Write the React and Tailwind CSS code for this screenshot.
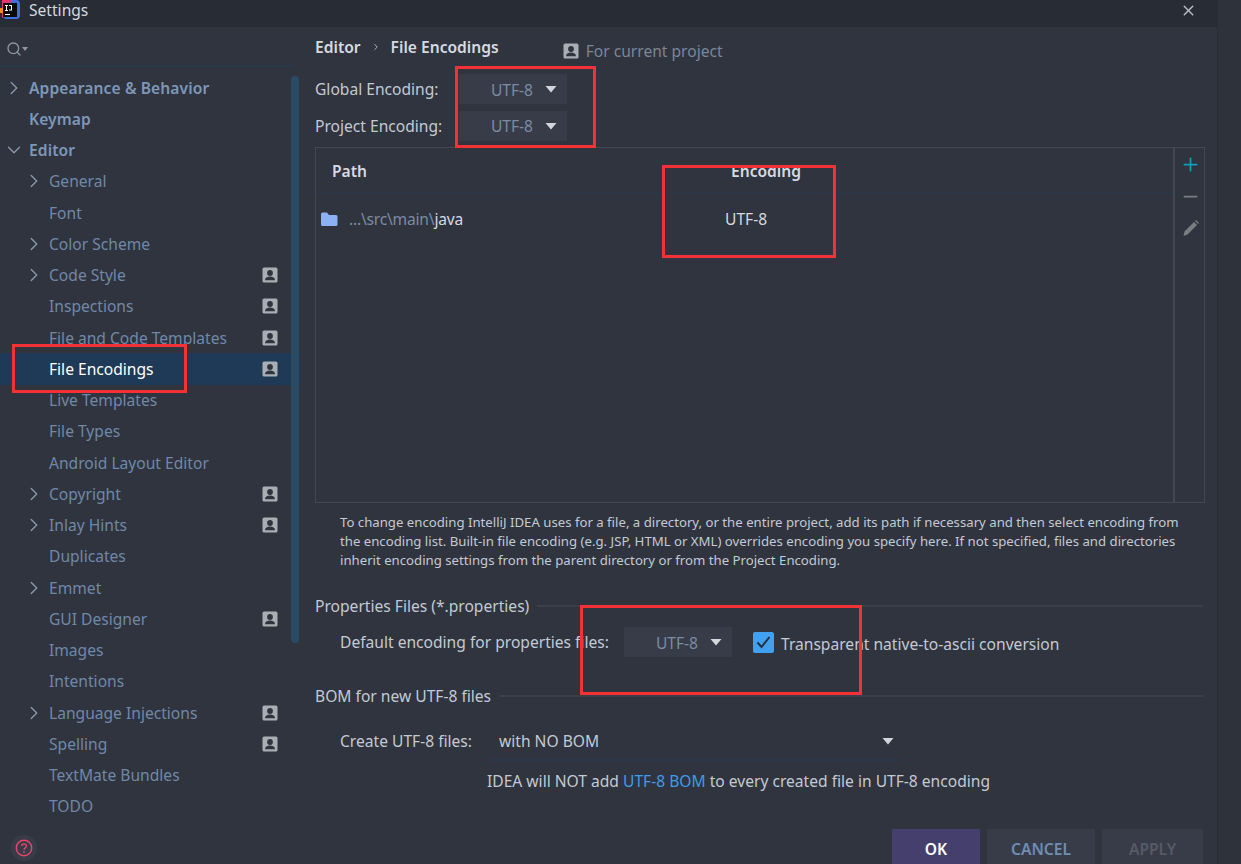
import React from "react";
import { ChevronRight, ChevronDown, Search, X, Plus, Minus } from "lucide-react";

const font = "font-['Noto_Sans','Open_Sans',sans-serif]";

const rows = [
  { label: "Appearance & Behavior", level: 0, arrow: "right", bold: true },
  { label: "Keymap", level: 0, bold: true },
  { label: "Editor", level: 0, arrow: "down", bold: true },
  { label: "General", level: 1, arrow: "right" },
  { label: "Font", level: 1 },
  { label: "Color Scheme", level: 1, arrow: "right" },
  { label: "Code Style", level: 1, arrow: "right", badge: true },
  { label: "Inspections", level: 1, badge: true },
  { label: "File and Code Templates", level: 1, badge: true },
  { label: "File Encodings", level: 1, badge: true, selected: true },
  { label: "Live Templates", level: 1 },
  { label: "File Types", level: 1 },
  { label: "Android Layout Editor", level: 1 },
  { label: "Copyright", level: 1, arrow: "right", badge: true },
  { label: "Inlay Hints", level: 1, arrow: "right", badge: true },
  { label: "Duplicates", level: 1 },
  { label: "Emmet", level: 1, arrow: "right" },
  { label: "GUI Designer", level: 1, badge: true },
  { label: "Images", level: 1 },
  { label: "Intentions", level: 1 },
  { label: "Language Injections", level: 1, arrow: "right", badge: true },
  { label: "Spelling", level: 1, badge: true },
  { label: "TextMate Bundles", level: 1 },
  { label: "TODO", level: 1 },
];

const PersonBadge = ({ className = "" }) => (
  <svg width="16" height="16" viewBox="0 0 16 16" className={className}>
    <rect x="0.5" y="0.5" width="15" height="15" rx="1.5" fill="#a7afb4" />
    <circle cx="8" cy="6" r="2.9" fill="#30343e" />
    <path d="M3 13.2c0-2.4 2.2-3.6 5-3.6s5 1.2 5 3.6z" fill="#30343e" />
  </svg>
);

const Caret = ({ className = "" }) => (
  <svg width="12" height="8" viewBox="0 0 12 8" className={className}>
    <path d="M0.5 1h11L6 7.5z" fill="#d3d7dc" />
  </svg>
);

const TreeRow = ({ row }) => (
  <div className={`h-[31.25px] flex items-center relative shrink-0 ${row.selected ? "bg-[#1e3a56]" : ""}`}>
    {row.arrow === "right" && (
      <ChevronRight
        size={22}
        strokeWidth={1.5}
        className={`text-[#8a98a8] absolute ${row.level === 0 ? "left-[3px]" : "left-[23px]"}`}
      />
    )}
    {row.arrow === "down" && <ChevronDown size={22} strokeWidth={1.5} className="text-[#8a98a8] absolute left-[3px]" />}
    <span
      className={`text-[15.6px] whitespace-nowrap ${row.level === 0 ? "ml-[29px]" : "ml-[49px]"} ${
        row.selected ? "text-white" : row.bold ? "text-[#7d97b9] font-semibold tracking-[0.1px]" : "text-[#6f88a8]"
      }`}
    >
      {row.label}
    </span>
    {row.badge && <PersonBadge className="ml-auto mr-[22px]" />}
  </div>
);

const Combo = ({ className = "" }) => (
  <div className={`w-[108px] h-[30px] bg-[#383c49] flex items-center justify-end pr-[10px] gap-[12px] ${className}`}>
    <span className="text-[15.6px] mt-[1px] text-[#7b8ba3]">UTF-8</span>
    <Caret />
  </div>
);

const SectionTitle = ({ title }) => (
  <div className="flex items-center gap-2 h-[20px]">
    <span className="text-[15.6px] text-[#c3cad4] whitespace-nowrap">{title}</span>
    <div className="flex-1 h-[2px] bg-[#3b3f4a]" />
  </div>
);

export default function App() {
  return (
    <div className={`w-[1241px] h-[864px] flex overflow-hidden relative bg-[#2e323b] leading-[24px] ${font}`}>
      <div className="w-[1218px] h-full flex flex-col bg-[#30343e] border-r border-[#2a2d35]">
        {/* title bar */}
        <div className="h-[27px] pb-[7px] bg-[#282c35] flex items-center shrink-0">
          <svg width="21" height="20" viewBox="0 0 21 20">
            <rect x="3" y="0" width="17" height="19" rx="4" fill="#3f6fe0" />
            <path d="M2 0h10L6 10l-3 8-1-1z" fill="#e8356d" />
            <rect x="0" y="8" width="4" height="5" fill="#f28a1d" />
            <rect x="3" y="3" width="14" height="14" fill="#0b0b0b" />
            <rect x="5" y="14" width="5" height="1" fill="#ffffff" />
            <path d="M5 5h3v1H7v4h1v1H5v-1h1V6H5zM9 5h3v5.500h-3v-1h2V6H9z" fill="#ffffff" />
          </svg>
          <span className="ml-[8px] text-[15.6px] leading-[20px] text-[#d4d8dd]">Settings</span>
          <X size={17} strokeWidth={2} className="ml-auto mr-[20px] text-[#b6bec6]" />
        </div>

        <div className="flex-1 flex min-h-0">
          {/* sidebar */}
          <div className="w-[300px] shrink-0 flex flex-col relative">
            <div className="h-[40px] w-[293px] border-b-2 border-[#28394a] flex items-center pl-[6px] pt-[5px] shrink-0">
              <Search size={16} strokeWidth={2} className="text-[#8d97a3]" />
              <svg width="6" height="4" viewBox="0 0 6 4" className="-mb-[1px]">
                <path d="M0 0h6L3 4z" fill="#8d97a3" />
              </svg>
            </div>
            <div className="pt-[5px] flex flex-col">
              {rows.map((r) => (
                <TreeRow key={r.label} row={r} />
              ))}
            </div>
            <div className="absolute left-[291px] top-[49px] w-[8px] h-[567px] rounded-full bg-[#2b4a64]" />
            <div className="absolute left-[11px] bottom-[3px] w-[26px] h-[26px] rounded-full bg-[#383c49] flex items-center justify-center">
              <svg width="18" height="18" viewBox="0 0 18 18" fill="none">
                <circle cx="9" cy="9" r="7.7" stroke="#e8476a" strokeWidth="1.4" />
                <path d="M6.600 7.100c0-1.400 1.100-2.200 2.400-2.200s2.400.8 2.400 2.100c0 1.900-2.400 1.900-2.400 3.700" stroke="#e8476a" strokeWidth="1.4" />
                <circle cx="9" cy="13" r="0.9" fill="#e8476a" />
              </svg>
            </div>
          </div>

          {/* main panel */}
          <div className="flex-1 min-w-0 pl-[15px] pr-[14px] flex flex-col">
            <div className="flex items-center h-[40px] shrink-0">
              <span className="text-[15.6px] font-semibold text-[#d5dae1]">Editor</span>
              <ChevronRight size={10} strokeWidth={2} className="mx-[10px] text-[#c3cad4]" />
              <span className="text-[15.6px] font-semibold text-[#d5dae1]">File Encodings</span>
              <PersonBadge className="ml-[64px] mt-[8px]" />
              <span className="ml-[7px] mt-[8px] text-[15.6px] text-[#7a8698]">For current project</span>
            </div>

            <div className="flex items-center h-[30px] mt-[7px] shrink-0">
              <span className="w-[144px] text-[15.6px] text-[#c3cad4]">Global Encoding:</span>
              <Combo />
            </div>
            <div className="flex items-center h-[31px] mt-[6px] shrink-0">
              <span className="w-[144px] text-[15.6px] text-[#c3cad4]">Project Encoding:</span>
              <Combo />
            </div>

            {/* path table */}
            <div className="mt-[6px] -mr-[2px] h-[356px] shrink-0 border border-[#43474f] flex">
              <div className="flex-1 flex flex-col">
                <div className="h-[45px] pt-[2px] border-b border-[#28394a] flex items-center text-[15.6px] font-semibold text-[#d5dae1]">
                  <span className="ml-[16px] w-[399px]">Path</span>
                  <span>Encoding</span>
                </div>
                <div className="h-[52px] flex items-center text-[15.6px]">
                  <svg width="18" height="16" viewBox="0 0 18 16" className="ml-[4px]">
                    <path d="M1 3a1.500 1.500 0 0 1 1.500-1.500H7L9 4h7a1.500 1.500 0 0 1 1.500 1.500v8A1.500 1.500 0 0 1 16 15H2.500A1.500 1.500 0 0 1 1 13.500z" fill="#8cb1f5" />
                  </svg>
                  <span className="ml-[11px] w-[376px] tracking-[-0.2px] text-[#7b8ba3]">
                    ...\src\main\<span className="text-[#d5dae1]">java</span>
                  </span>
                  <span className="text-[#d5dae1]">UTF-8</span>
                </div>
              </div>
              <div className="w-[31px] border-l-2 border-[#43474f] flex flex-col items-center pt-[6px] pl-[2px] gap-[11px]">
                <Plus size={21} strokeWidth={2} className="text-[#0fa0b5]" />
                <Minus size={21} strokeWidth={2} className="text-[#7a7d82]" />
                <svg width="18" height="18" viewBox="0 0 18 18" className="mt-[1px]">
                  <path d="M1.500 17l1-4.500L12 3l3 3-9.500 9.500z" fill="#7a7d82" />
                  <path d="M13 2l1-1 3 3-1 1z" fill="#7a7d82" />
                </svg>
              </div>
            </div>

            <p className="ml-[25px] mt-[10px] w-[845px] h-[57px] text-[13.2px] leading-[19px] text-[#c3cad4] shrink-0">
              To change encoding IntelliJ IDEA uses for a file, a directory, or the entire project, add its path if necessary and then select encoding from the encoding list. Built-in file encoding (e.g. JSP, HTML or XML) overrides encoding you specify here. If not specified, files and directories inherit encoding settings from the parent directory or from the Project Encoding.
            </p>

            <div className="mt-[26px] shrink-0">
              <SectionTitle title="Properties Files (*.properties)" />
            </div>
            <div className="flex items-center h-[30px] mt-[11px] ml-[25px] shrink-0">
              <span className="w-[284px] text-[15.6px] text-[#c3cad4] whitespace-nowrap">Default encoding for properties files:</span>
              <Combo />
              <div className="ml-[21px] w-[21px] h-[21px] rounded-[2px] bg-[#41a0f0] flex items-center justify-center">
                <svg width="15" height="13" viewBox="0 0 15 13" fill="none">
                  <path d="M1.500 6.500l4 4.500 8-10" stroke="#27303d" strokeWidth="2" />
                </svg>
              </div>
              <span className="ml-[7px] mt-[4px] text-[15.6px] text-[#c3cad4] whitespace-nowrap">Transparent native-to-ascii conversion</span>
            </div>

            <div className="mt-[29px] shrink-0">
              <SectionTitle title="BOM for new UTF-8 files" />
            </div>
            <div className="flex items-center h-[38px] mt-[17px] ml-[25px] shrink-0">
              <span className="w-[147px] -mt-[2px] text-[15.6px] text-[#c3cad4] whitespace-nowrap">Create UTF-8 files:</span>
              <div className="w-[416px] h-[38px] border-b-2 border-[#28394a] flex items-center pl-[12px] pr-[9px]">
                <span className="text-[15.6px] text-[#c3cad4]">with NO BOM</span>
                <Caret className="ml-auto" />
              </div>
            </div>
            <div className="ml-[172px] mt-[8px] text-[15.6px] text-[#c3cad4] whitespace-nowrap shrink-0">
              IDEA will NOT add <span className="text-[#3d9be9]">UTF-8 BOM</span> to every created file in UTF-8 encoding
            </div>

            <div className="mt-auto flex justify-end gap-[7px] text-[15.6px] font-semibold shrink-0">
              <div className="w-[88px] h-[35px] pt-[4px] bg-[#443f6c] text-white flex items-center justify-center">OK</div>
              <div className="w-[108px] h-[35px] pt-[4px] bg-[#383c49] text-[#6f8db3] flex items-center justify-center">CANCEL</div>
              <div className="w-[101px] h-[35px] pt-[4px] bg-[#383c49] text-[#565a64] flex items-center justify-center">APPLY</div>
            </div>
          </div>
        </div>
      </div>

      {/* red annotation boxes drawn over the screenshot */}
      <div className="absolute left-[455px] top-[66px] w-[141px] h-[82px] border-[3px] border-[#f23236]" />
      <div className="absolute left-[662px] top-[165px] w-[174px] h-[93px] border-[3px] border-[#f23236]" />
      <div className="absolute left-[12px] top-[344px] w-[175px] h-[49px] border-[3px] border-[#f23236]" />
      <div className="absolute left-[580px] top-[605px] w-[282px] h-[90px] border-[3px] border-[#f23236]" />
    </div>
  );
}
